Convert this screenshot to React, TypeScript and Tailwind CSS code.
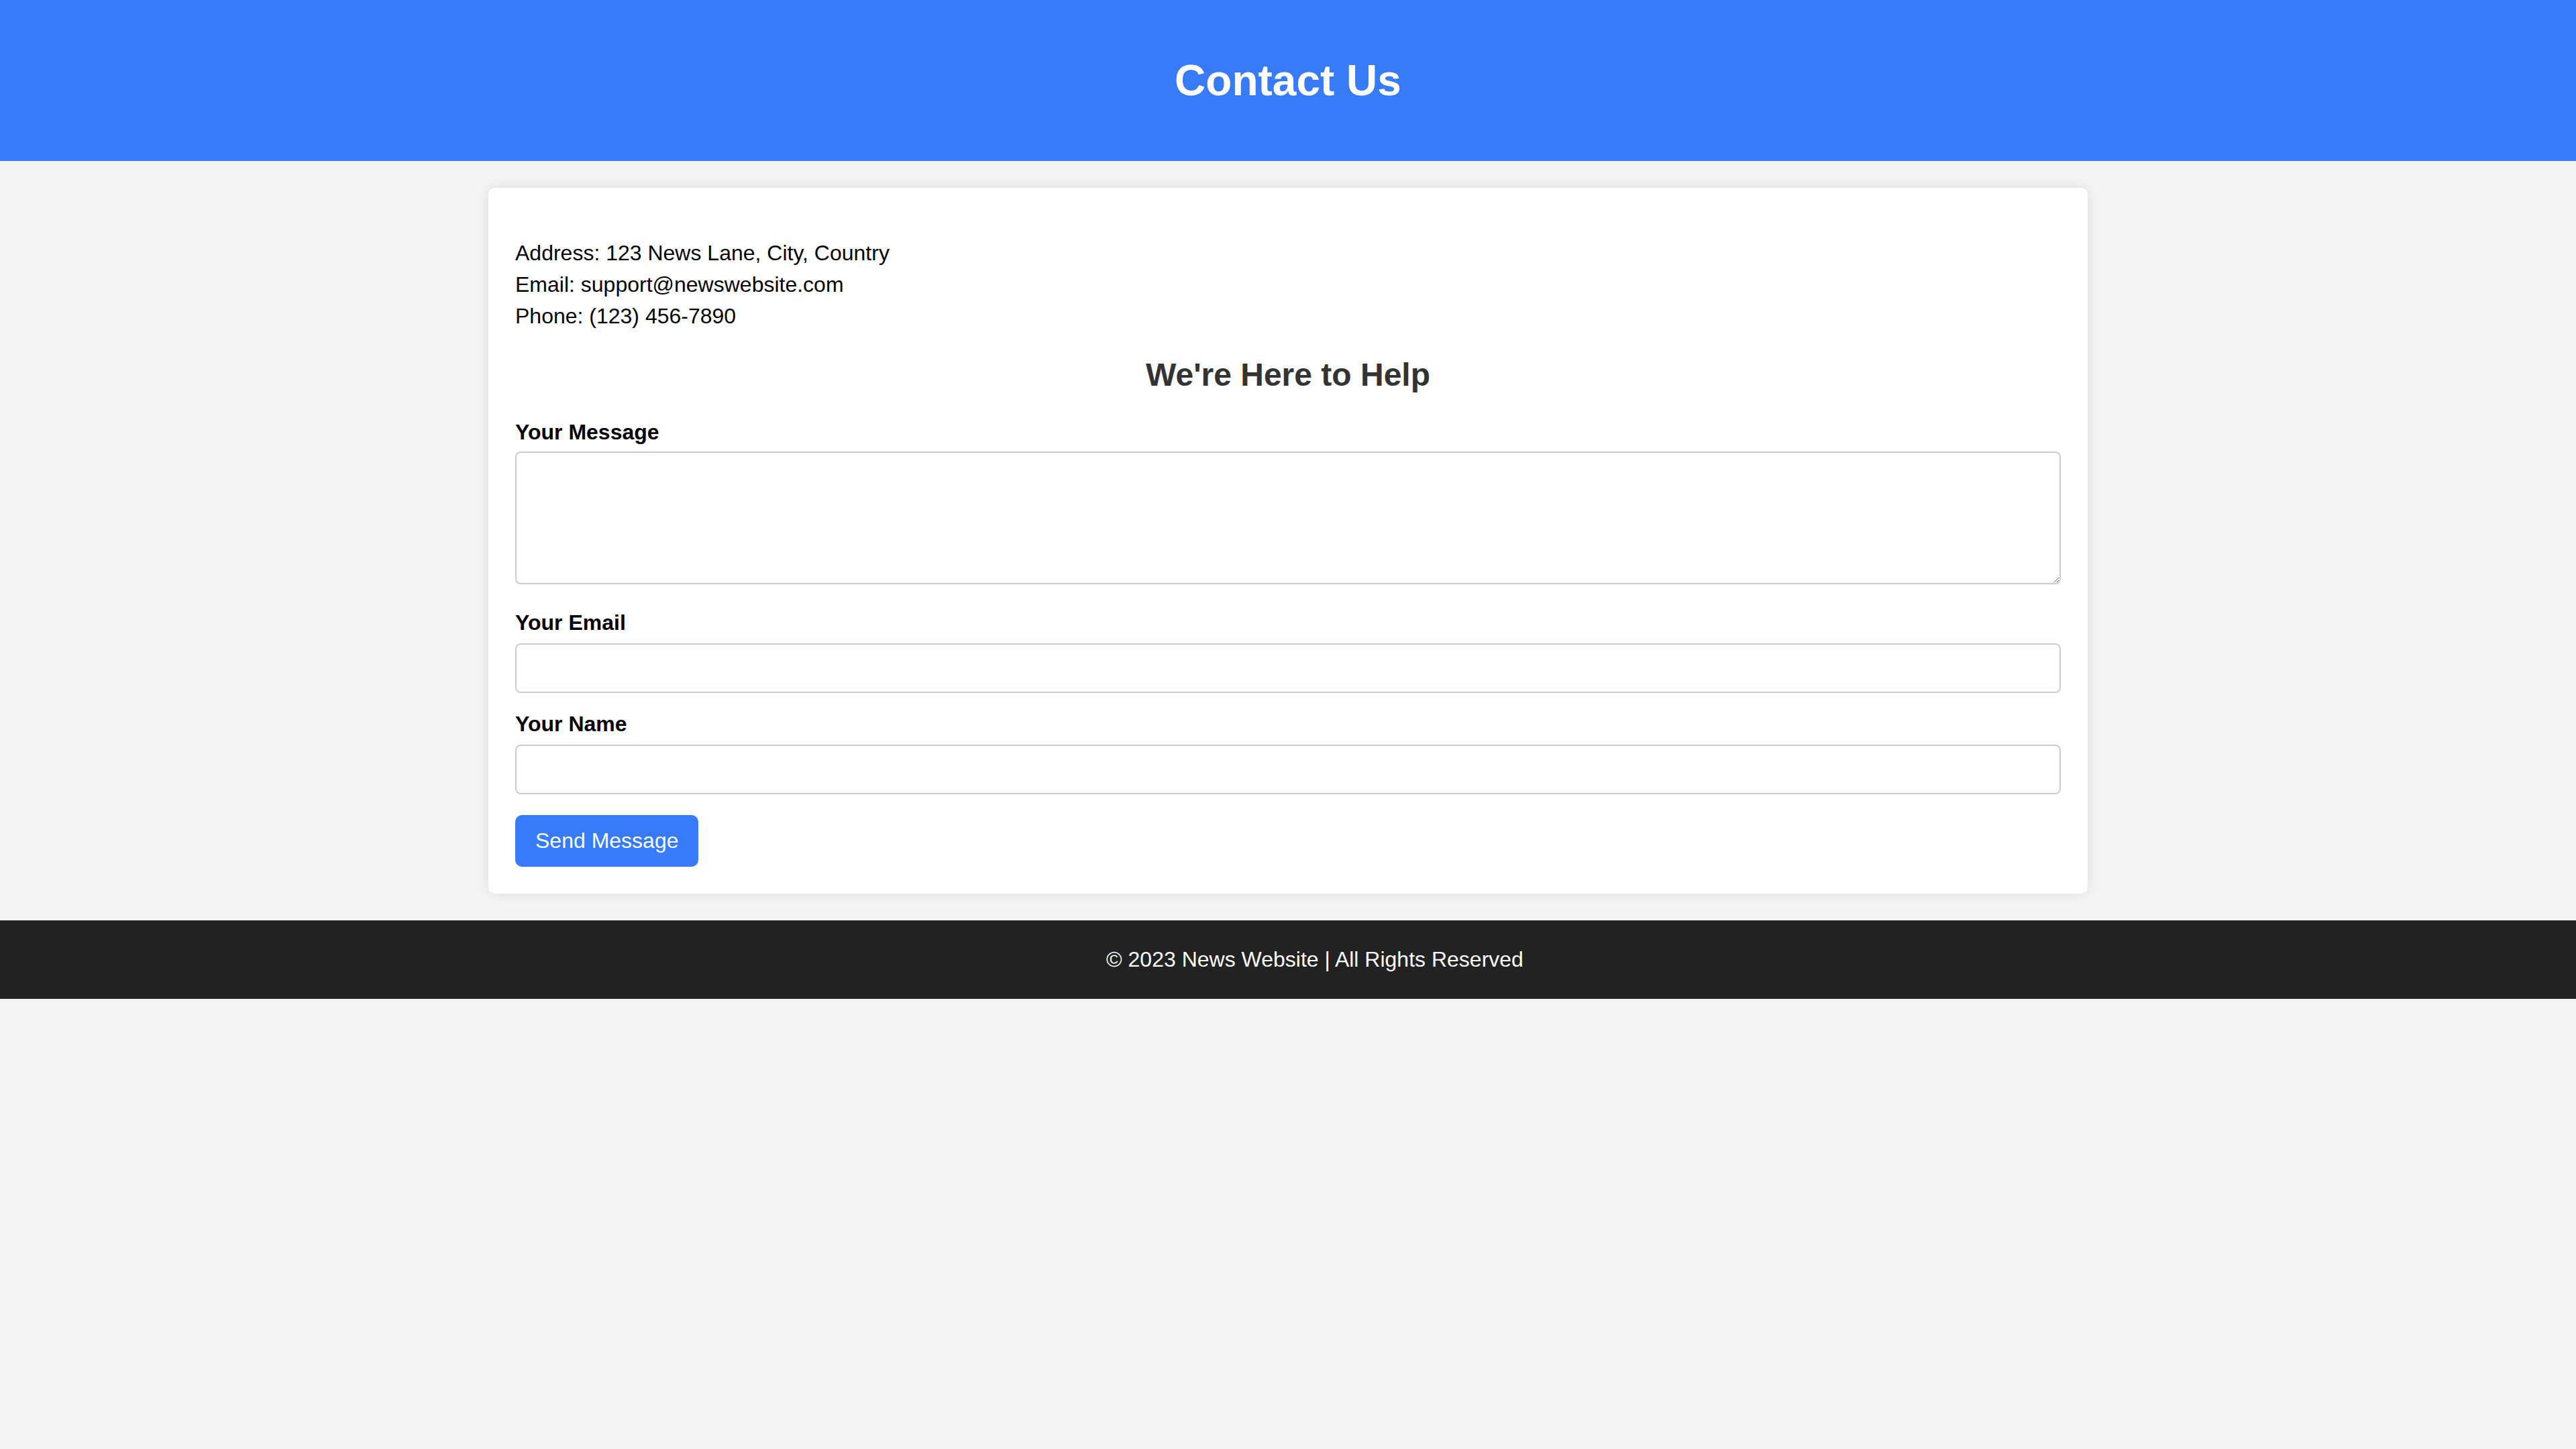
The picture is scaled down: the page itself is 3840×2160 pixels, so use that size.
export default function App() {
  return (
    <div className="min-h-screen bg-[#f4f4f4] font-['Liberation_Sans',Arial,sans-serif] text-black">
      {/* Header */}
      <header className="h-[240px] bg-[#377bf6] flex items-center justify-center">
        <h1 className="text-[64px] font-bold text-white leading-[74px]">Contact Us</h1>
      </header>

      {/* Card */}
      <main className="w-[2384px] mx-auto my-[40px] bg-white rounded-[10px] shadow-[0_0_20px_rgba(0,0,0,0.1)] p-[40px]">
        <div className="mt-[34px] text-[32px] leading-[47px]">
          <div>Address: 123 News Lane, City, Country</div>
          <div>Email: support@newswebsite.com</div>
          <div>Phone: (123) 456-7890</div>
        </div>

        <h2 className="mt-[36px] text-[48px] leading-[56px] font-bold text-[#333] text-center">
          We're Here to Help
        </h2>

        <form className="mt-[39px] flex flex-col" onSubmit={(e) => e.preventDefault()}>
          <label className="text-[32px] leading-[37px] font-bold mb-[10px]">Your Message</label>
          <textarea className="block w-full h-[198px] border-2 border-[#cccccc] rounded-[8px] p-[16px] text-[32px] outline-none resize-y" />

          <label className="mt-[39px] text-[32px] leading-[37px] font-bold mb-[12px]">Your Email</label>
          <input
            type="email"
            className="block w-full h-[74px] border-2 border-[#cccccc] rounded-[8px] px-[16px] text-[32px] outline-none"
          />

          <label className="mt-[28px] text-[32px] leading-[37px] font-bold mb-[12px]">Your Name</label>
          <input
            type="text"
            className="block w-full h-[74px] border-2 border-[#cccccc] rounded-[8px] px-[16px] text-[32px] outline-none"
          />

          <div className="mt-[31px]">
            <button
              type="submit"
              className="h-[77px] px-[30px] bg-[#377bf6] text-white text-[32px] leading-[37px] rounded-[10px]"
            >
              Send Message
            </button>
          </div>
        </form>
      </main>

      {/* Footer */}
      <footer className="bg-[#222222] text-white text-center text-[32px] leading-[37px] py-[40px] pl-[80px]">
        © 2023 News Website | All Rights Reserved
      </footer>
    </div>
  );
}
